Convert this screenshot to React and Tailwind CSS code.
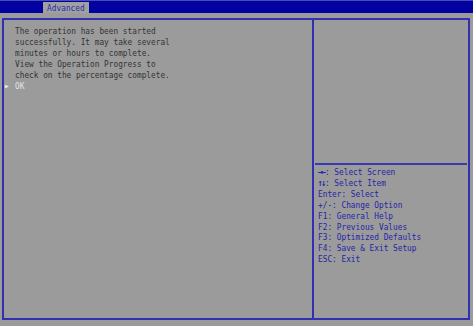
export default function App() {
  const help = [
    ["\u2192\u2190", ": Select Screen"],
    ["\u2191\u2193", ": Select Item"],
    ["", "Enter: Select"],
    ["", "+/-: Change Option"],
    ["", "F1: General Help"],
    ["", "F2: Previous Values"],
    ["", "F3: Optimized Defaults"],
    ["", "F4: Save & Exit Setup"],
    ["", "ESC: Exit"],
  ];
  return (
    <div
      className="w-[473px] h-[326px] bg-[#9b9b9b] overflow-hidden"
      style={{ fontFamily: '"DejaVu Sans Mono", "Liberation Mono", monospace' }}
    >
      <div className="h-[13px] bg-[#0202a0] border-t border-[#4a4ab8] flex">
        <div className="ml-[43px] mt-[1px] w-[46px] h-[11px] bg-[#a0a0a0] text-[#2a2ab0] text-[9.5px] leading-[11px] flex justify-center">
          <span className="scale-x-[0.82]">Advanced</span>
        </div>
      </div>
      <div className="mt-[5px] mx-[2px] h-[302px] w-[468px] border-2 border-[#3030b0] flex">
        <div className="w-[310px] shrink-0 border-r-2 border-[#3030b0] pt-[5px] text-[9.5px] leading-[11px]">
          <div className="pl-[11px] text-[#333333]">
            <div className="origin-left scale-x-[0.82] whitespace-pre">
              <div>The operation has been started</div>
              <div>successfully. It may take several</div>
              <div>minutes or hours to complete.</div>
              <div>View the Operation Progress to</div>
              <div>check on the percentage complete.</div>
            </div>
          </div>
          <div className="flex items-center">
            <span className="w-[11px] text-[#f0f0f0] text-[6px] pl-[1px]">{"\u25B6"}</span>
            <span className="text-[#e4e4e4] origin-left scale-x-[0.82]">OK</span>
          </div>
        </div>
        <div className="w-[154px] min-w-0 flex flex-col overflow-hidden">
          <div className="h-[145px] mx-[1px] border-b-2 border-[#3a3ab0]"></div>
          <div className="pt-[2px] pl-[4px] text-[9.5px] leading-[10.9px] text-[#2424a8]">
            <div className="origin-left scale-x-[0.82] whitespace-pre">
              {help.map(([a, b], i) => (
                <div key={i}>
                  {a && <span className="font-bold tracking-[-1.5px]">{a}</span>}
                  {b}
                </div>
              ))}
            </div>
          </div>
        </div>
      </div>
    </div>
  );
}
